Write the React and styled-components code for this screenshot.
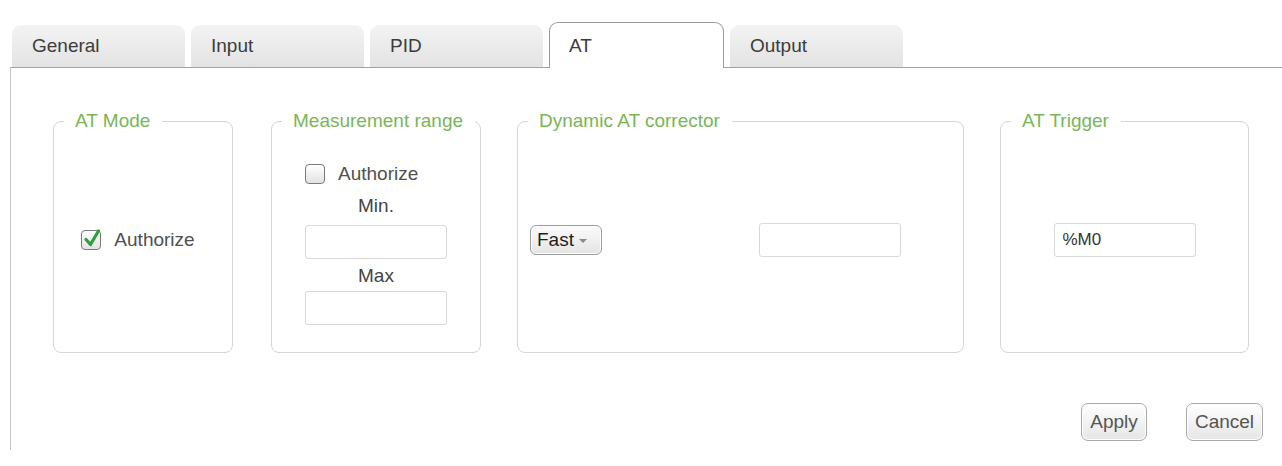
import React from 'react';
import styled, { createGlobalStyle } from 'styled-components';

const GlobalStyle = createGlobalStyle`
  body {
    margin: 0;
    background: #ffffff;
    font-family: 'Liberation Sans', Arial, sans-serif;
  }
`;

const tabs = ['General', 'Input', 'PID', 'AT', 'Output'];

const Page = styled.div`
  width: 1282px;
  height: 466px;
  padding: 22px 0 0 10px;
  box-sizing: border-box;
  overflow: hidden;
`;

const TabBar = styled.div`
  display: flex;
  align-items: flex-end;
  gap: 6px;
  height: 45px;
  padding-left: 2px;
`;

const Tab = styled.div`
  position: relative;
  box-sizing: border-box;
  width: ${p => (p.$active ? '175px' : '173px')};
  height: ${p => (p.$active ? '46px' : '42px')};
  margin-bottom: ${p => (p.$active ? '-1px' : '0')};
  padding-left: ${p => (p.$active ? '19px' : '20px')};
  display: flex;
  align-items: center;
  border-radius: 9px 9px 0 0;
  font-size: 19px;
  color: #3c3c3c;
  z-index: ${p => (p.$active ? 2 : 1)};
  background: ${p =>
    p.$active ? '#ffffff' : 'linear-gradient(#f3f3f3, #e3e3e3)'};
  border: ${p => (p.$active ? '1px solid #9a9a9a' : 'none')};
  border-bottom: none;
`;

const Panel = styled.div`
  position: relative;
  height: 383px;
  box-sizing: border-box;
  border-top: 1px solid #a2a2a2;
  border-left: 1px solid #c6c6c6;
  padding: 42px 0 0 42px;
`;

const GroupRow = styled.div`
  display: flex;
  align-items: flex-start;
`;

const Group = styled.fieldset`
  box-sizing: border-box;
  width: ${p => p.$width}px;
  margin: 0 ${p => p.$gap || 0}px 0 0;
  padding: 0;
  min-width: 0;
  border: 1px solid #d6d6d6;
  border-radius: 8px;
`;

const Legend = styled.legend`
  margin-left: 10px;
  padding: 0 12px 0 11px;
  font-size: 19px;
  line-height: 22px;
  color: #7ab55a;
  white-space: nowrap;
`;

const GroupBody = styled.div`
  height: 220px;
  box-sizing: border-box;
  display: flex;
  flex-direction: ${p => (p.$column ? 'column' : 'row')};
  align-items: center;
  justify-content: ${p => p.$justify || 'center'};
  padding: ${p => p.$pad || '0 0 4px 0'};
`;

const CheckRow = styled.label`
  display: flex;
  align-items: center;
  gap: 13px;
  font-size: 19px;
  color: #505050;
  align-self: ${p => p.$self || 'auto'};
`;

const Box = styled.span`
  position: relative;
  width: 20px;
  height: 20px;
  box-sizing: border-box;
  border: 1.5px solid #7a7a7a;
  border-radius: 4px;
  background: linear-gradient(#ffffff, #e2e2e2);

  svg {
    position: absolute;
    left: 0px;
    top: -4px;
  }
`;

const Stack = styled.div`
  width: 142px;
  display: flex;
  flex-direction: column;
  align-items: center;
`;

const SmallLabel = styled.div`
  font-size: 19px;
  line-height: 22px;
  color: #444;
  margin-top: ${p => p.$top || 0}px;
`;

const TextBox = styled.div`
  box-sizing: border-box;
  width: 142px;
  height: 34px;
  margin-top: ${p => p.$top || 0}px;
  margin-left: ${p => p.$left || 0}px;
  border: 1px solid #d9d9d9;
  border-radius: 3px;
  background: #fff;
  display: flex;
  align-items: center;
  padding-left: 8px;
  font-size: 17px;
  color: #333;
`;

const Select = styled.div`
  box-sizing: border-box;
  width: 72px;
  height: 30px;
  border: 1px solid #9c9c9c;
  border-radius: 6px;
  background: linear-gradient(#fbfbfb, #e4e4e4);
  box-shadow: inset 0 0 0 1px #ffffff;
  display: flex;
  align-items: center;
  padding-left: 6px;
  gap: 5px;
  font-size: 19px;
  color: #1e1e1e;
`;

const Caret = styled.span`
  width: 0;
  height: 0;
  border-left: 4px solid transparent;
  border-right: 4px solid transparent;
  border-top: 4px solid #8a8a8a;
  margin-top: 1px;
`;

const Footer = styled.div`
  display: flex;
  justify-content: flex-end;
  gap: 39px;
  margin-top: 50px;
  padding-right: 19px;
`;

const Button = styled.button`
  box-sizing: border-box;
  width: ${p => p.$width}px;
  height: 38px;
  padding: 0;
  border: 1px solid #a9a9a9;
  border-radius: 7px;
  background: linear-gradient(#ffffff, #e6e6e6);
  box-shadow: inset 0 0 0 1px #ffffff;
  font-family: 'Liberation Sans', Arial, sans-serif;
  font-size: 19px;
  color: #555;
`;

const Check = ({ checked }) => (
  <Box>
    {checked && (
      <svg width="20" height="22" viewBox="0 0 20 22">
        <path
          d="M4 12.5 L8.5 17.5 L16.5 4"
          fill="none"
          stroke="#2f9e3c"
          strokeWidth="3.2"
          strokeLinecap="round"
          strokeLinejoin="round"
        />
      </svg>
    )}
  </Box>
);

export default function App() {
  return (
    <>
      <GlobalStyle />
      <Page>
        <TabBar>
          {tabs.map(t => (
            <Tab key={t} $active={t === 'AT'}>
              {t}
            </Tab>
          ))}
        </TabBar>
        <Panel>
          <GroupRow>
            <Group $width={180} $gap={38}>
              <Legend>AT Mode</Legend>
              <GroupBody $pad="0 10px 4px 0">
                <CheckRow>
                  <Check checked />
                  Authorize
                </CheckRow>
              </GroupBody>
            </Group>
            <Group $width={210} $gap={36}>
              <Legend>Measurement range</Legend>
              <GroupBody $column $justify="flex-start" $pad="31px 0 0 0">
                <Stack>
                  <CheckRow $self="flex-start">
                    <Check />
                    Authorize
                  </CheckRow>
                  <SmallLabel $top={10}>Min.</SmallLabel>
                  <TextBox $top={8} />
                  <SmallLabel $top={6}>Max</SmallLabel>
                  <TextBox $top={4} />
                </Stack>
              </GroupBody>
            </Group>
            <Group $width={447} $gap={36}>
              <Legend>Dynamic AT corrector</Legend>
              <GroupBody $justify="flex-start" $pad="0 0 4px 12px">
                <Select>
                  Fast
                  <Caret />
                </Select>
                <TextBox $left={157} />
              </GroupBody>
            </Group>
            <Group $width={249}>
              <Legend>AT Trigger</Legend>
              <GroupBody>
                <TextBox>%M0</TextBox>
              </GroupBody>
            </Group>
          </GroupRow>
          <Footer>
            <Button $width={66}>Apply</Button>
            <Button $width={77}>Cancel</Button>
          </Footer>
        </Panel>
      </Page>
    </>
  );
}
